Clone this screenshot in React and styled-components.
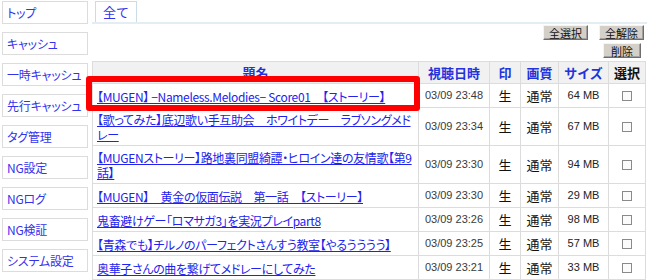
import React from "react";
import styled, { createGlobalStyle } from "styled-components";

const GlobalStyle = createGlobalStyle`
  body {
    margin: 0;
    background: #fff;
    font-family: "Noto Sans CJK JP", "Liberation Sans", sans-serif;
    font-size: 12px;
  }
`;

const Page = styled.div`
  display: flex;
  align-items: flex-start;
  width: 650px;
  height: 280px;
  overflow: hidden;
`;

const Sidebar = styled.nav`
  display: flex;
  flex-direction: column;
  gap: 8px;
  width: 86px;
  padding: 1px 0 0 2px;
  flex-shrink: 0;
`;

const NavButton = styled.a`
  display: block;
  box-sizing: border-box;
  height: 23px;
  border: 1px solid #dcdcdc;
  padding-left: 4px;
  line-height: 21px;
  font-size: 12px;
  color: #3333ee;
  text-decoration: none;
  white-space: nowrap;
  font-feature-settings: "palt";
  letter-spacing: -0.2px;
`;

const Main = styled.div`
  position: relative;
  flex: 1;
  margin: 0 3px 0 4px;
`;

const TabBar = styled.div`
  display: flex;
  height: 21px;
  padding: 1px 0 0 3px;
  border-bottom: 2px solid #e2edf4;
`;

const Tab = styled.span`
  box-sizing: border-box;
  height: 21px;
  padding: 0 7px;
  border: 1px solid #c9dce8;
  border-bottom: none;
  line-height: 20px;
  font-size: 13px;
  color: #3333ee;
`;

const Toolbar = styled.div`
  display: flex;
  flex-direction: column;
  align-items: flex-end;
  gap: 3px;
  padding: 1px 3px 0 0;
`;

const ButtonRow = styled.div`
  display: flex;
  gap: 11px;
  margin-right: ${(p) => p.$inset || 0}px;
`;

const GrayButton = styled.button`
  box-sizing: border-box;
  height: 15px;
  padding: 0 ${(p) => p.$pad || 5}px;
  background: #d4d0c8;
  border: 1px solid;
  border-color: #f4f4f4 #6e6e6e #6e6e6e #f4f4f4;
  box-shadow: inset -1px -1px 0 #a0a0a0;
  font-family: "Noto Sans CJK JP", sans-serif;
  font-size: 11px;
  line-height: 12px;
  color: #111;
`;

const Table = styled.table`
  width: 554px;
  margin-top: 3px;
  border-collapse: collapse;
  table-layout: fixed;
`;

const Th = styled.th`
  height: 21px;
  padding: 0;
  border: 1px solid #dcdcdc;
  background: #f1f1f1;
  font-size: 13px;
  line-height: 15px;
  font-weight: bold;
  color: ${(p) => (p.$plain ? "#111" : "#2233dd")};
  text-align: center;
`;

const Td = styled.td`
  padding: ${(p) => (p.$title ? "4px 4px 3px" : "4px 0")};
  border: 1px solid #dcdcdc;
  font-size: 12px;
  line-height: 15px;
  text-align: ${(p) => (p.$title ? "left" : "center")};
  vertical-align: middle;
`;

const TitleLink = styled.a`
  vertical-align: top;
  font-size: 12px;
  line-height: 15px;
  color: #2222ee;
  text-decoration: underline;
  font-feature-settings: "palt";
  letter-spacing: -0.35px;
`;

const Mono = styled.span`
  vertical-align: top;
  line-height: 15px;
  font-family: "Liberation Sans", sans-serif;
  font-size: 11px;
  color: ${(p) => p.$color || "#3a3a3a"};
`;

const Kanji = styled.span`
  vertical-align: top;
  line-height: 15px;
  font-size: 13px;
  color: #111;
`;

const Check = styled.input`
  appearance: none;
  display: block;
  margin: 0 auto;
  width: 10px;
  height: 10px;
  border: 1px solid #8a8a8a;
  background: #fbfbfb;
`;

const Highlight = styled.div`
  position: absolute;
  left: -6px;
  top: 76px;
  width: 334px;
  height: 35px;
  box-sizing: border-box;
  border: 6px solid #ff0000;
  border-radius: 3px;
  pointer-events: none;
`;

const nav = [
  "トップ",
  "キャッシュ",
  "一時キャッシュ",
  "先行キャッシュ",
  "タグ管理",
  "NG設定",
  "NGログ",
  "NG検証",
  "システム設定",
];

const rows = [
  { title: "【MUGEN】 −Nameless.Melodies− Score01　【ストーリー】", time: "03/09 23:48", size: "64 MB" },
  { title: "【歌ってみた】底辺歌い手互助会　ホワイトデー　ラブソングメドレー", time: "03/09 23:34", size: "67 MB" },
  { title: "【MUGENストーリー】路地裏同盟綺譚・ヒロイン達の友情歌【第9話】", time: "03/09 23:30", size: "94 MB" },
  { title: "【MUGEN】　黄金の仮面伝説　第一話　【ストーリー】", time: "03/09 23:30", size: "29 MB" },
  { title: "鬼畜避けゲー「ロマサガ3」を実況プレイpart8", time: "03/09 23:26", size: "98 MB" },
  { title: "【青森でも】チルノのパーフェクトさんすう教室【やるうううう】", time: "03/09 23:25", size: "57 MB" },
  { title: "奥華子さんの曲を繋げてメドレーにしてみた", time: "03/09 23:21", size: "33 MB" },
  { title: "【東方】魔理沙とアリスのクッキー☆　第1話", time: "03/09 23:19", size: "41 MB" },
];

export default function App() {
  return (
    <>
      <GlobalStyle />
      <Page>
        <Sidebar>
          {nav.map((n) => (
            <NavButton key={n} href="#">
              {n}
            </NavButton>
          ))}
        </Sidebar>
        <Main>
          <TabBar>
            <Tab>全て</Tab>
          </TabBar>
          <Toolbar>
            <ButtonRow>
              <GrayButton>全選択</GrayButton>
              <GrayButton>全解除</GrayButton>
            </ButtonRow>
            <ButtonRow $inset={3}>
              <GrayButton $pad={7}>削除</GrayButton>
            </ButtonRow>
          </Toolbar>
          <Table>
            <colgroup>
              <col style={{ width: 326 }} />
              <col style={{ width: 71 }} />
              <col style={{ width: 31 }} />
              <col style={{ width: 38 }} />
              <col style={{ width: 50 }} />
              <col />
            </colgroup>
            <thead>
              <tr>
                <Th>題名</Th>
                <Th>視聴日時</Th>
                <Th>印</Th>
                <Th>画質</Th>
                <Th>サイズ</Th>
                <Th $plain>選択</Th>
              </tr>
            </thead>
            <tbody>
              {rows.map((r) => (
                <tr key={r.time + r.size}>
                  <Td $title>
                    <TitleLink href="#">{r.title}</TitleLink>
                  </Td>
                  <Td>
                    <Mono>{r.time}</Mono>
                  </Td>
                  <Td>
                    <Kanji>生</Kanji>
                  </Td>
                  <Td>
                    <Kanji>通常</Kanji>
                  </Td>
                  <Td>
                    <Mono $color="#222">{r.size}</Mono>
                  </Td>
                  <Td>
                    <Check type="checkbox" />
                  </Td>
                </tr>
              ))}
            </tbody>
          </Table>
          <Highlight />
        </Main>
      </Page>
    </>
  );
}
